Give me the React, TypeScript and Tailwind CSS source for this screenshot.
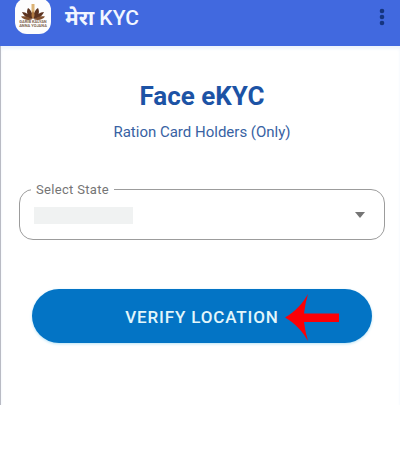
import { useState } from 'react';

const states = ['Bihar', 'Himachal Pradesh', 'Kerala', 'Rajasthan'];

const Logo = () => (
  <svg viewBox="0 0 36 36" className="h-9 w-9 shrink-0" role="img" aria-label="Anna Yojana">
    <rect width="36" height="36" rx="12" fill="#fdfdfd" />
    <path d="M18 20V6" fill="none" stroke="#dcb375" strokeWidth="3" />
    <g fill="#5b3320">
      <path d="M17.500 21C12 18 11 14 13 10c3 2 5 6 4.500 11Z" />
      <path d="M18.500 21C24 18 25 14 23 10c-3 2-5 6-4.500 11Z" />
      <path d="M17 21C12 21 9 18 7 14c4 0 8 3 10 7Z" />
      <path d="M19 21c5 0 8-3 10-7-4 0-8 3-10 7Z" />
    </g>
    <g fill="#80502f">
      <path d="M17 21.500c-5 1-9 0-11-3 4-1 8 0 11 3Z" />
      <path d="M19 21.500c5 1 9 0 11-3-4-1-8 0-11 3Z" />
      <path d="M18 21c-2-3-2-5 0-8 2 3 2 5 0 8Z" fill="#b07a43" />
    </g>
    <g fill="#80664f" fontFamily="Roboto, sans-serif" fontWeight="700" fontSize="4" textAnchor="middle">
      <text x="18" y="25">GARIB KALYAN</text>
      <text x="18" y="29">ANNA YOJANA</text>
    </g>
  </svg>
);

const Dots = () => (
  <svg viewBox="0 0 6 18" className="h-[18px] w-[6px]" fill="#15357f">
    <circle cx="3" cy="3" r="2.300" />
    <circle cx="3" cy="9" r="2.300" />
    <circle cx="3" cy="15" r="2.300" />
  </svg>
);

const App = () => {
  const [state, setState] = useState('');

  return (
    <div className="min-h-screen bg-white font-[Roboto,'Noto_Sans',sans-serif]">
      <header className="flex h-[46px] items-start justify-between bg-[#4169df] px-[15px]">
        <div className="-mt-[2px] flex items-start gap-[14px]">
          <Logo />
          <h1 className="pt-2 text-[21px] leading-6 font-medium text-[#f2f6ff]">
            <span className="font-bold">मेरा</span> KYC
          </h1>
        </div>
        <button type="button" aria-label="More options" className="mt-2">
          <Dots />
        </button>
      </header>

      <main className="border-l border-[#b9bbc4] pt-[34px] pr-[15px] pb-[62px] pl-[18px] shadow-[inset_0_3px_3px_#eef4fc]">
        <div className="text-center">
          <h2 className="text-[26px] leading-8 font-bold text-[#1c53a5]">Face eKYC</h2>
          <p className="mt-[10px] text-[15px] leading-5 text-[#3862a3]">Ration Card Holders (Only)</p>
        </div>

        <div className="relative mt-[47px]">
          <label
            htmlFor="state"
            className="absolute -top-[7px] left-3 bg-white px-[5px] text-[13px] leading-4 tracking-wide text-[#757575]"
          >
            Select State
          </label>
          <select
            id="state"
            value={state}
            onChange={(e) => setState(e.target.value)}
            className="block h-[51px] w-full appearance-none rounded-[14px] border border-[#9c9c9c] bg-white px-[14px] text-[15px] text-[#424242]"
          >
            <option value="" />
            {states.map((s) => (
              <option key={s} value={s}>{s}</option>
            ))}
          </select>
          {!state && <span className="pointer-events-none absolute top-[18px] left-[15px] h-[17px] w-[99px] bg-[#f0f2f2]" />}
          <svg viewBox="0 0 10 6" className="pointer-events-none absolute top-[23px] right-5 h-[6px] w-[10px]" fill="#757575">
            <path d="M0 0h10L5 6Z" />
          </svg>
        </div>

        <div className="mt-[49px] px-[13px]">
          <button
            type="button"
            className="relative h-[54px] w-full rounded-full bg-[#0374c5] pt-px text-[17px] leading-6 font-medium tracking-wider text-[#e2f6fb] shadow-[0_1px_3px_#b8e3f5]"
          >
            VERIFY LOCATION
            <svg viewBox="0 0 54 47" className="absolute top-[5px] right-[33px] h-[47px] w-[54px]" fill="#fb0006">
              <path d="M0 23.500C10 18 18 9 23 0Q20 10 19 19.500H54V28H19Q20 37 23 47C18 38 10 29 0 23.500Z" />
            </svg>
          </button>
        </div>
      </main>
    </div>
  );
};

export default App;
